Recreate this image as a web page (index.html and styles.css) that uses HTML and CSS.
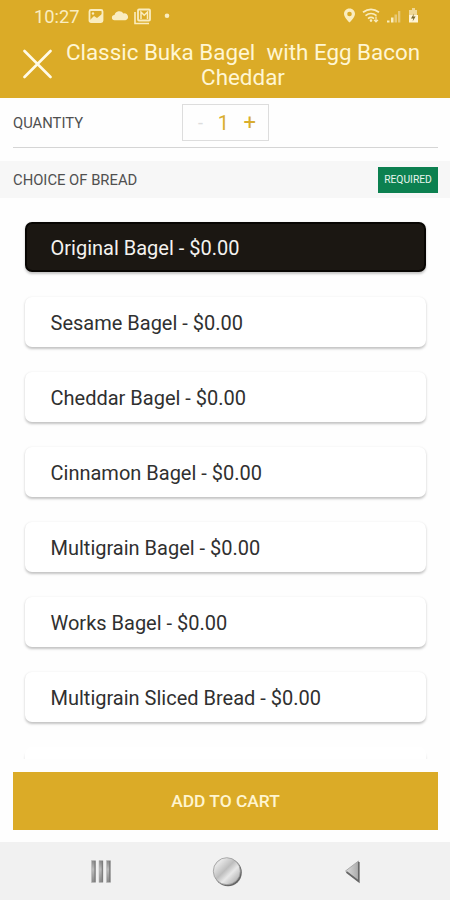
FILE: index.html
```html
<!DOCTYPE html>
<html lang="en">
<head>
<meta charset="utf-8">
<title>Classic Buka Bagel</title>
<link rel="stylesheet" href="styles.css">
</head>
<body>
<div class="app">
  <header class="header">
    <div class="status">
      <span class="time">10:27</span>
      <svg class="left-icons" width="84" height="18" viewBox="0 0 84 18" fill="none">
        <rect x="1.500" y="2" width="13" height="12" rx="1.500" stroke="#faedc0" stroke-width="1.800"/>
        <path d="M2 12l4-4 3 2 5-4v7H2z" fill="#faedc0"/><circle cx="5" cy="5.500" r="1.200" fill="#faedc0"/>
        <path d="M26 12.500a2.600 2.600 0 0 1 0-5.200 5 5 0 0 1 9-1.500 3.400 3.400 0 0 1 2 6.700z" transform="translate(.5 -.3)" fill="#faedc0"/>
        <path d="M47 4v11.500h14" stroke="#faedc0" stroke-width="1.600"/>
        <rect x="50" y="1.500" width="12" height="11" rx="1" stroke="#faedc0" stroke-width="1.800"/>
        <path d="M53 11V4l3.200 3.200L59.500 4v7" stroke="#faedc0" stroke-width="1.500"/>
        <circle cx="79" cy="7.800" r="2.300" fill="#faedc0"/>
      </svg>
      <svg class="right-icons" width="78" height="18" viewBox="0 0 78 18" fill="none">
        <path fill-rule="evenodd" d="M7.500 .5C4 .5 2 3.100 2 6c0 3.500 5.500 8.500 5.500 8.500S13 9.500 13 6C13 3.100 11 .5 7.500 .5zm0 3.200a2.300 2.300 0 1 1 0 4.600 2.300 2.300 0 0 1 0-4.600z" fill="#faedc0"/>
        <path d="M21 4.300q8-6 16 0M23.500 7.600q5.500-4.200 11 0M26 10.600q3-2.300 6 0" stroke="#faedc0" stroke-width="1.700"/>
        <circle cx="29" cy="12.600" r="1.300" fill="#faedc0"/>
        <path d="M34 8.500v5m-2-1.700l2 2 2-2" stroke="#faedc0" stroke-width="1.200"/>
        <path d="M45 14.500v-2h2.500v2zM49 14.500v-5h2.500v5z" fill="#faedc0"/>
        <path d="M52.500 14.500V6.500H55v8zM56 14.500V3h2.300v11.500z" fill="#e8c978"/>
        <path d="M70 0h3v2h2v5h-8V2h3z" fill="#efd795"/><path d="M67 7h9v7.500h-9z" fill="#fff4d4"/>
        <path d="M72 5.500l-3 5h2.300l-.7 3 3-5h-2.300z" fill="#79672b"/>
      </svg>
    </div>
    <div class="title-row">
      <svg class="close" width="30" height="30" viewBox="0 0 30 30"><path d="M2.500 2l26 26M28.500 2l-26 26" stroke="#fffbe8" stroke-width="2.600" stroke-linecap="round"/></svg>
      <h1 class="title">Classic Buka Bagel&nbsp; with Egg Bacon<br>Cheddar</h1>
    </div>
  </header>
  <section class="quantity">
    <span class="label wide">QUANTITY</span>
    <div class="stepper"><span class="minus">-</span><span class="count">1</span><span class="plus">+</span></div>
  </section>
  <section class="group">
    <span class="label">CHOICE OF BREAD</span>
    <span class="badge">REQUIRED</span>
  </section>
  <main class="options">
    <div class="option selected"><span>Original Bagel - $0.00</span></div>
    <div class="option"><span>Sesame Bagel - $0.00</span></div>
    <div class="option"><span>Cheddar Bagel - $0.00</span></div>
    <div class="option"><span>Cinnamon Bagel - $0.00</span></div>
    <div class="option"><span>Multigrain Bagel - $0.00</span></div>
    <div class="option"><span>Works Bagel - $0.00</span></div>
    <div class="option"><span>Multigrain Sliced Bread - $0.00</span></div>
    <div class="option"></div>
  </main>
  <footer class="cart"><div class="add">ADD TO CART</div></footer>
  <nav class="nav">
    <svg width="22" height="26" viewBox="0 0 22 26">
      <defs><linearGradient id="bar" x1="0" y1="0" x2="0" y2="1"><stop stop-color="#888"/><stop offset=".4" stop-color="#bbb"/><stop offset="1" stop-color="#888"/></linearGradient></defs>
      <path d="M1.500 2.500h4v22h-4zM9 2.500h4v22H9zM16.500 2.500h4v22h-4z" fill="url(#bar)" stroke="#bbb" stroke-width=".6"/>
      <path d="M5 3v21M12.300 3v21M19.800 3v21" stroke="#777" stroke-width="1.100"/>
    </svg>
    <svg width="32" height="32" viewBox="0 0 32 32">
      <defs><linearGradient id="disc" x1="0" y1="0" x2="1" y2="1"><stop stop-color="#bbb"/><stop offset=".2" stop-color="#e6e6e6"/><stop offset=".45" stop-color="#bdbdbd"/><stop offset=".62" stop-color="#e8e8e8"/><stop offset="1" stop-color="#999"/></linearGradient></defs>
      <circle cx="16" cy="17.500" r="13.800" fill="#666"/><circle cx="14.800" cy="16.200" r="13.500" fill="url(#disc)" stroke="#999" stroke-width=".8"/>
    </svg>
    <svg width="18" height="26" viewBox="0 0 18 26">
      <defs><linearGradient id="tri"><stop stop-color="#ddd"/><stop offset="1" stop-color="#aaa"/></linearGradient></defs>
      <path d="M1.500 13L14.500 3v20.500z" fill="url(#tri)" stroke="#aaa"/><path d="M2.500 14l12.300 9.500V4" fill="none" stroke="#666" stroke-width="1.700"/>
    </svg>
  </nav>
</div>
</body>
</html>
```
FILE: styles.css
```css
* { box-sizing: border-box; }
body { margin: 0; font-family: Roboto, "Liberation Sans", sans-serif; background: #fefefe; }
svg { display: block; flex: none; }
.app { width: 450px; height: 900px; display: flex; flex-direction: column; overflow: hidden; }
.header { height: 98px; flex: none; background: #dbab27; color: #fff6d3; }
.status { height: 34px; padding: 8px 30px 0 34px; display: flex; align-items: flex-start; }
.time { width: 54px; font-size: 18.3px; line-height: 18px; color: #faedc0; white-space: nowrap; }
.right-icons { margin-left: auto; }
.title-row { display: flex; padding-left: 22px; }
.close { margin-top: 15px; }
.title { margin: 6px 0 0 7px; width: 368px; font-size: 22.4px; font-weight: 400; line-height: 25px; text-align: center; white-space: nowrap; }
.quantity { height: 50px; flex: none; margin: 0 12px 0 13px; border-bottom: 1.5px solid #d5d5d5; display: flex; align-items: center; }
.label { font-size: 14.8px; color: #505050; white-space: nowrap; }
.wide { width: 169px; }
.stepper { width: 87px; height: 37px; border: 1px solid #ddd; display: flex; align-items: center; justify-content: space-between; padding: 0 12px 0 15px; color: #d9ad2e; font-size: 20px; }
.minus { color: #ddd; font-size: 18px; }
.plus { font-size: 22px; }
.group { height: 37px; flex: none; margin-top: 13px; padding: 0 12px 0 13px; background: #f7f7f7; display: flex; align-items: center; justify-content: space-between; }
.badge { width: 60px; height: 26px; background: #0c8050; color: #e7f5ee; font-size: 10.3px; line-height: 26px; text-align: center; }
.options { flex: 1; min-height: 0; padding: 24px 24px 0 25px; display: flex; flex-direction: column; gap: 25px; overflow: hidden; }
.option { height: 50px; flex: none; border-radius: 7px; background: #fff; box-shadow: 0 1.5px 2.5px rgba(0,0,0,.23); padding: 2px 0 0 25.5px; display: flex; align-items: center; font-size: 20px; color: #303030; white-space: nowrap; }
.option:last-child { box-shadow: 0 4px 2.5px rgba(0,0,0,.14); }
.selected { background: #1b1712; border: 2px solid #080603; padding-left: 23.5px; color: #f4f2ef; }
.cart { flex: none; height: 83px; padding: 13px 12px 12px 13px; background: #fefefe; }
.add { height: 58px; background: #dbab27; color: #fff5cf; font-size: 17.4px; font-weight: 500; line-height: 59px; text-align: center; }
.nav { flex: none; height: 58px; background: #f1f1f1; padding: 0 88px 0 90px; display: flex; align-items: center; justify-content: space-between; }
```
